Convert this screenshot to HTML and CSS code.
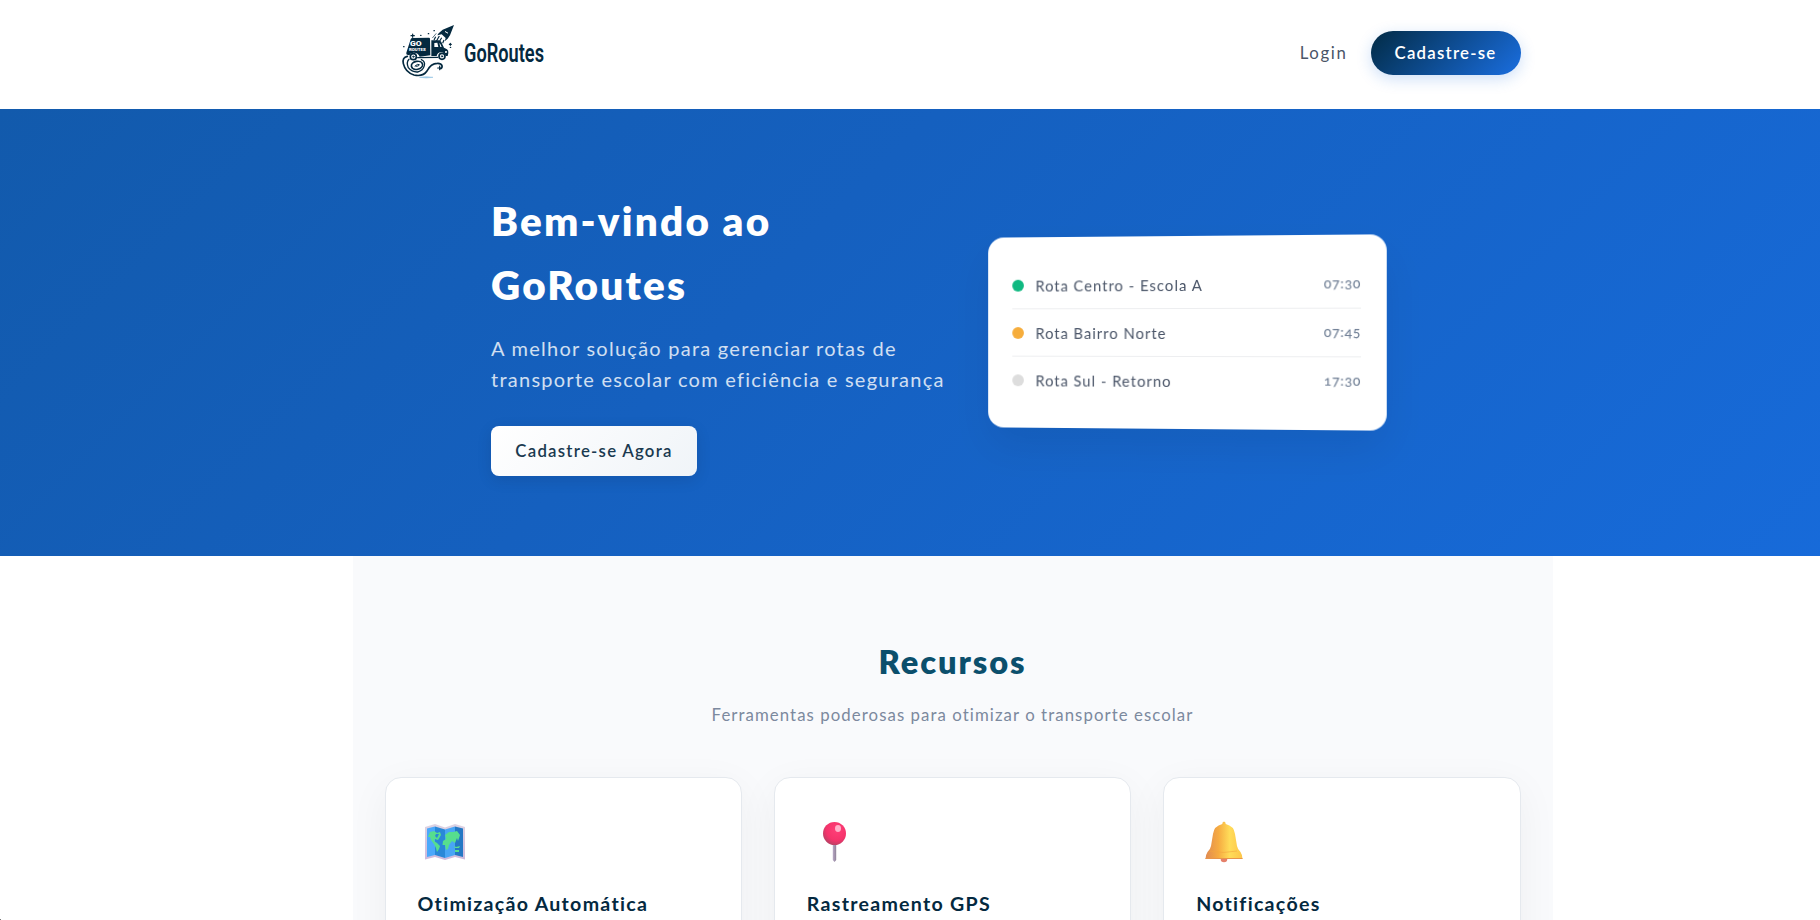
FILE: index.html
```html
<!DOCTYPE html>
<html lang="pt-BR">
<head>
<meta charset="utf-8">
<title>GoRoutes</title>
<link rel="stylesheet" href="styles.css">
</head>
<body>
<header class="header">
  <nav class="nav">
    <a class="brand">
      <svg class="brand-mark" viewBox="0 0 180 186" fill="none" stroke="#04293f" stroke-linecap="round" stroke-linejoin="round">
        <path d="M168 15 L134 29 L122 40 L118 46 L131 43 L143 54 L140 64 L149 56 L156 46 Z" fill="#04293f" stroke="none"/>
        <path d="M142 35 L149 39" stroke="#fff" stroke-width="3"/>
        <path d="M113 50 L108 60 M124 48 L115 64 M131 53 L123 67 M138 60 L134 70" stroke-width="3.500" stroke-linecap="butt"/>
        <path d="M114 41 L104 53" stroke-width="2"/>
        <path d="M38 58 Q39 54 44 54 L93 53 Q96 53 96 57 L97 106 L65 110 Q60 97 46 98 Q37 99 34 106 L27 104 Q24 103 25 98 Z" fill="#04293f" stroke="none"/>
        <path d="M100 61 L122 61 Q127 61 130 66 L138 83 L147 88 Q152 91 151 99 L149 108 L143 108 Q139 96 129 97 Q118 98 116 108 L100 108 Z" fill="#04293f" stroke="none"/>
        <path d="M109 69 L118 68 L121 81 L109 81 Z M124 69 L127 72 L131 81 L127 81 Z" fill="#fff" stroke="none"/>
        <path d="M141 94 L147 93 L146 99 L141 98 Z" fill="#fff" stroke="none"/>
        <circle cx="46" cy="110" r="9" fill="#fff" stroke-width="5"/>
        <circle cx="46" cy="110" r="2" stroke-width="3"/>
        <circle cx="132" cy="109" r="9" fill="#fff" stroke-width="5"/>
        <circle cx="132" cy="109" r="2" stroke-width="3"/>
        <path d="M59 113 L119 112" stroke-width="4"/>
        <text x="36" y="79" class="brand-plate" textLength="35" lengthAdjust="spacingAndGlyphs">GO</text>
        <text x="33" y="93" class="brand-plate-small" textLength="50" lengthAdjust="spacingAndGlyphs">ROUTES</text>
        <path d="M28 109 Q12 112 16 131 Q22 157 48 165 Q75 171 87 153 C94 139 104 130 118 130 C134 129 135 142 128 146" stroke-width="5"/>
        <path d="M33 118 Q24 127 31 143 Q42 157 59 156 Q75 152 79 137 Q82 124 70 119" stroke-width="4"/>
        <ellipse cx="57" cy="136" rx="17" ry="12" transform="rotate(-12 57 136)" stroke-width="5"/>
        <path d="M51 138 Q60 130 64 134 Q64 139 54 139" stroke-width="3"/>
        <path d="M44 42 v10 M39 47 h10 M125 138 v11 M119 144 h12 M157 70 v6 M154 73 h6" stroke-width="3.500"/>
        <path d="M68 46 h1 M17 80 h1 M108 32 h1 M91 41 h1 M157 82 h1" stroke-width="4"/>
        <path d="M66 172 Q84 168 105 172 Q84 176 66 172 Z" fill="#9bc9e6" stroke="#9bc9e6" stroke-width="2"/>
      </svg>
      <svg class="brand-name" viewBox="0 0 84 40"><text x="0" y="28.5" textLength="80" lengthAdjust="spacingAndGlyphs">GoRoutes</text></svg>
    </a>
    <div class="nav-links">
      <a class="nav-login">Login</a>
      <a class="nav-signup">Cadastre-se</a>
    </div>
  </nav>
</header>

<section class="hero">
  <div class="hero-text">
    <h1 class="hero-title">Bem-vindo ao<br>GoRoutes</h1>
    <p class="hero-lead">A melhor solução para gerenciar rotas de<br>transporte escolar com eficiência e segurança</p>
    <a class="hero-cta">Cadastre-se Agora</a>
  </div>
  <div class="routes">
    <div class="route"><span class="dot dot-green"></span><span class="route-name">Rota Centro - Escola A</span><span class="route-time">07:30</span></div>
    <div class="route"><span class="dot dot-amber"></span><span class="route-name">Rota Bairro Norte</span><span class="route-time">07:45</span></div>
    <div class="route"><span class="dot dot-grey"></span><span class="route-name">Rota Sul - Retorno</span><span class="route-time">17:30</span></div>
  </div>
</section>

<section class="features">
  <h2 class="features-title">Recursos</h2>
  <p class="features-lead">Ferramentas poderosas para otimizar o transporte escolar</p>
  <div class="cards">
    <article class="card">
      <svg class="card-icon" viewBox="0 0 54 46">
        <defs>
          <linearGradient id="mapEdge" x1="0" y1="0" x2="0" y2="1"><stop offset="0" stop-color="#ddd3e3"/><stop offset="1" stop-color="#cdb9dc"/></linearGradient>
        </defs>
        <path d="M7 6 L17 3 L27 6.500 L37 3 L47 6 L47 38.500 L37 36 L27 39 L17 36 L7 38.500 Z" fill="url(#mapEdge)"/>
        <path d="M9 7.500 L17 5.500 V34 L9 36 Z" fill="#4aa8fb"/>
        <path d="M17 5.500 L27 8.500 V37 L17 34 Z" fill="#2988d8"/>
        <path d="M27 8.500 L37 5.500 V34 L27 37 Z" fill="#48a5f5"/>
        <path d="M37 5.500 L45 7.500 V36 L37 34 Z" fill="#2478c4"/>
        <path d="M10 16 L12 11 L16 10 L19 12 L22 11 L23 14 L20 19 L17 18 L16 20 L19 22 L22 25 L21 28 L19 31 L18 27 L16 23 L13 19 L12 16 Z M24.500 24 L25 20 L28 18 L27 14 L31 11 L35 11 L39 10 L42 14 L40 20 L39 17 L37 22 L34 20 L31 24 L30 28 L28 29 L27 24 Z M36 25 L38 26 L42 25 L41 27 L37 27 Z M37 29 L41 29 L41 31 L37 31 Z" fill="#56de8e"/>
        <path d="M18 13 L21 13 L19 17 L17 15 Z" fill="#2988d8"/>
      </svg>
      <h3 class="card-title">Otimização Automática</h3>
    </article>
    <article class="card">
      <svg class="card-icon" viewBox="0 0 54 46">
        <defs>
          <radialGradient id="pinHead" cx=".6" cy=".35" r=".75"><stop offset="0" stop-color="#ff3f78"/><stop offset=".6" stop-color="#f5336b"/><stop offset="1" stop-color="#a74462"/></radialGradient>
          <linearGradient id="pinStem"><stop offset="0" stop-color="#b9a9c6"/><stop offset="1" stop-color="#8f8298"/></linearGradient>
        </defs>
        <path d="M25.800 22 H29.200 V39 L27.500 41 L25.800 39 Z" fill="url(#pinStem)"/>
        <circle cx="27.500" cy="12.500" r="11.500" fill="url(#pinHead)"/>
        <ellipse cx="31" cy="7.500" rx="3" ry="3.400" fill="#ffb0c9"/>
      </svg>
      <h3 class="card-title">Rastreamento GPS</h3>
    </article>
    <article class="card">
      <svg class="card-icon" viewBox="0 0 54 46">
        <defs>
          <linearGradient id="bell"><stop offset="0" stop-color="#e08a52"/><stop offset=".35" stop-color="#f6ab41"/><stop offset=".65" stop-color="#ffdc59"/><stop offset="1" stop-color="#fdc548"/></linearGradient>
        </defs>
        <circle cx="28" cy="38" r="3.300" fill="#e5806a"/>
        <path d="M28 0.500 Q30 1 29.700 3 Q38 5 39 13 L41 25 Q41.500 28 44.500 31 Q46.500 34 46.500 38 H9.500 Q9.500 34 11.500 31 Q14.500 28 15 25 L17 13 Q18 5 26.300 3 Q26 1 28 0.500 Z" fill="url(#bell)"/>
        <path d="M14 30 Q27 33 41 30" fill="none" stroke="#f4a63d" stroke-width="1" opacity=".6"/>
        <path d="M9.500 37.500 H46.500" stroke="#e8954b" stroke-width="1"/>
      </svg>
      <h3 class="card-title">Notificações</h3>
    </article>
  </div>
</section>
<span class="corner"></span>
</body>
</html>
```

FILE: styles.css
```css
* { box-sizing: border-box; margin: 0; padding: 0; }
html { overflow: hidden; background: #fff; }
body {
  width: 1905px;
  height: 920px;
  overflow: hidden;
  font-family: Lato, "Open Sans", sans-serif;
  font-size: 16px;
  line-height: 1.6;
  color: #4a5568;
}
.header { height: 109px; background: #fff; }
.nav {
  width: 1200px;
  height: 106px;
  margin: 0 auto;
  padding: 0 32px 0 45.5px;
  display: flex;
  align-items: center;
  justify-content: space-between;
}
.brand { display: flex; align-items: center; gap: 6px; }
.brand-mark { width: 60px; height: 62px; margin-top: -4px; }
.brand-plate { font: 900 19px Roboto, sans-serif; fill: #fff; stroke: none; }
.brand-plate-small { font: 900 11px Roboto, sans-serif; fill: #fff; stroke: none; }
.brand-name { width: 84px; height: 40px; overflow: visible; }
.brand-name text { font: 600 25px Roboto, sans-serif; fill: #04293f; }
.nav-links { display: flex; align-items: center; gap: 23px; }
.nav-login { font-size: 16.8px; letter-spacing: 1.65px; line-height: 26px; padding-bottom: 1px; }
.nav-signup {
  width: 150px;
  height: 44px;
  border-radius: 22px;
  line-height: 43px;
  text-align: center;
  font-weight: 600;
  color: #fff;
  font-size: 16.8px;
  letter-spacing: 1.25px;
  background: linear-gradient(135deg, #022b45, #1a6ee0);
  box-shadow: 0 4px 15px rgba(26, 110, 224, .22);
}

.hero {
  height: 447px;
  padding: 0 521px 0 491px;
  display: flex;
  align-items: center;
  justify-content: space-between;
  background: linear-gradient(135deg, #125aac, #1560bf 40%, #176bdb);
}
.hero-title { font-size: 40.4px; font-weight: 800; color: #fff; line-height: 64px; letter-spacing: 2.2px; white-space: nowrap; }
.hero-lead { margin: 16px 0 32px; font-size: 20px; line-height: 30.7px; letter-spacing: 1.25px; color: #fff; opacity: .8; white-space: nowrap; }
.hero-cta {
  display: block;
  width: 206px;
  height: 50px;
  border-radius: 8px;
  line-height: 49px;
  text-align: center;
  font-weight: 600;
  font-size: 16.8px;
  letter-spacing: 1.25px;
  color: #1a3a50;
  background: linear-gradient(135deg, #fff, #f0f4f8);
  box-shadow: 0 4px 15px rgba(0, 0, 0, .1);
}
.routes {
  width: 400px;
  height: 193px;
  padding: 25px 25px 23px;
  border-radius: 16px;
  background: #fff;
  box-shadow: 0 20px 40px rgba(0, 0, 0, .07);
  transform: perspective(1000px) rotateY(-5deg);
}
.route { height: 48px; display: flex; align-items: center; border-bottom: 1px solid #edeef0; }
.route:last-child { border-bottom: 0; }
.dot { width: 12px; height: 12px; border-radius: 50%; margin-right: 12px; }
.dot-green { background: #10b981; }
.dot-amber { background: #f6ad3c; }
.dot-grey { background: #ddd; }
.route-name { flex: 1; font-size: 15px; letter-spacing: 1.03px; }
.route-time { font-size: 13.6px; font-weight: 500; letter-spacing: .7px; color: #718096; font-variant-numeric: oldstyle-nums; }

.features { width: 1200px; margin: 0 auto; padding: 80px 32px; background: #f9fafc; text-align: center; }
.features-title { font-size: 32.6px; font-weight: 800; line-height: 51px; color: #0b4f6c; letter-spacing: 1.9px; }
.features-lead { margin: 15px 0 49px; font-size: 16.8px; line-height: 25.6px; color: #7c899e; letter-spacing: 1.07px; }
.cards { display: grid; grid-template-columns: repeat(3, 1fr); gap: 32px; text-align: left; }
.card {
  height: 300px;
  padding: 43px 32px 32px;
  border: 1px solid #e5e9ee;
  border-radius: 16px;
  background: #fff;
  box-shadow: 0 10px 40px rgba(0, 0, 0, .05);
}
.card-icon { display: block; width: 54px; height: 46px; }
.card-title { margin-top: 22px; font-size: 19.6px; line-height: 30.7px; color: #04293f; letter-spacing: 1.27px; white-space: nowrap; }
.corner { position: absolute; left: 0; bottom: 0; width: 1px; height: 1px; background: #777; }
```
